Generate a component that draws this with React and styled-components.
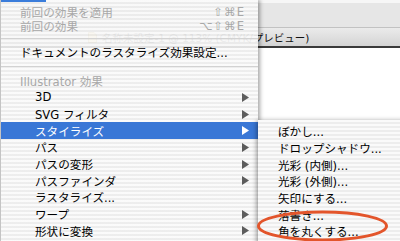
import React from 'react'
import styled, { createGlobalStyle } from 'styled-components'

const FONT = `"DejaVu Sans", "Noto Sans CJK JP", sans-serif`
const STRIPES = `repeating-linear-gradient(rgba(250, 250, 250, 0.93) 0 2px, rgba(236, 236, 236, 0.93) 2px 4px)`

const GlobalStyle = createGlobalStyle`
	html, body {
		margin: 0;
		padding: 0;
	}
	body {
		width: 400px;
		height: 241px;
		overflow: hidden;
		background: #fff;
	}
`

const Desktop = styled.div`
	position: relative;
	width: 400px;
	height: 241px;
	overflow: hidden;
	font-family: ${FONT};
	background: #fff;
`

const DocWindow = styled.div`
	display: flex;
	flex-direction: column;
	height: 100%;
`

const Toolbar = styled.div`
	height: 28px;
	box-sizing: border-box;
	background: linear-gradient(#f6f6f6 0 3px, #e6e6e6 3px);
	border-bottom: 1px solid #c2c2c2;
`

const TitleBar = styled.div`
	height: 20px;
	box-sizing: border-box;
	display: flex;
	align-items: center;
	gap: 5px;
	padding-left: 88px;
	background: linear-gradient(#ebebeb, #d4d4d4);
	border-bottom: 2px solid #3a3a3a;
	font-size: 10.5px;
	color: #111;
	white-space: nowrap;
`

const Canvas = styled.div`
	flex: 1;
	background: #fff;
`

const Menu = styled.div`
	position: absolute;
	left: 0;
	top: 0;
	width: 258px;
	height: 241px;
	box-sizing: border-box;
	background: ${STRIPES};
	border-left: 1px solid #c4c4c4;
	box-shadow: 2px 0 4px rgba(0, 0, 0, 0.35);
`

const MenuTitleMark = styled.div`
	width: 45px;
	height: 2px;
	margin-bottom: 3px;
	background: #3b7ddb;
`

const Submenu = styled.div`
	position: absolute;
	left: 258px;
	top: 120px;
	width: 150px;
	height: 130px;
	padding-top: 3px;
	background: repeating-linear-gradient(#fafafa 0 2px, #ededed 2px 4px);
	box-shadow: -1px 1px 5px rgba(0, 0, 0, 0.45);
`

const Item = styled.div`
	height: ${(p) => p.$h}px;
	display: flex;
	align-items: center;
	padding: 0 9px 0 ${(p) => p.$indent}px;
	font-size: 11.6px;
	white-space: nowrap;
	color: ${(p) => (p.$disabled ? '#a8a8a8' : p.$active ? '#fff' : '#000')};
	background: ${(p) => (p.$active ? '#3977d6' : 'transparent')};
`

const Label = styled.span`
	flex: 1;
`

const Shortcut = styled.span`
	margin-right: 4px;
	font-size: 11.6px;
	color: #a8a8a8;
	letter-spacing: 1px;
`

const Separator = styled.div`
	height: ${(p) => p.$h}px;
	display: flex;
	align-items: center;
	&::after {
		content: '';
		flex: 1;
		height: 1px;
		background: #d2d2d2;
	}
`

const Ring = styled.svg`
	position: absolute;
	left: 255px;
	top: 208px;
	overflow: visible;
`

function Arrow({ active }) {
	return (
		<svg width="7" height="9" viewBox="0 0 7 9">
			<polygon points="0,0 7,4.5 0,9" fill={active ? '#fff' : '#5c5c5c'} />
		</svg>
	)
}

const effects = [
	{ label: '3D', sub: true },
	{ label: 'SVG フィルタ', sub: true },
	{ label: 'スタイライズ', sub: true, active: true },
	{ label: 'パス', sub: true },
	{ label: 'パスの変形', sub: true },
	{ label: 'パスファインダ', sub: true },
	{ label: 'ラスタライズ...' },
	{ label: 'ワープ', sub: true },
	{ label: '形状に変換', sub: true },
]

const stylize = [
	'ぼかし...',
	'ドロップシャドウ...',
	'光彩 (内側)...',
	'光彩 (外側)...',
	'矢印にする...',
	'落書き...',
	'角を丸くする...',
]

export default function App() {
	return (
		<Desktop>
			<GlobalStyle />
			<DocWindow>
				<Toolbar />
				<TitleBar>
					<svg width="9" height="11" viewBox="0 0 9 11">
						<path d="M0.5 0.5h5.5l2.5 2.5v7.5h-8z" fill="#f3d27a" stroke="#a98a3a" />
					</svg>
					<span>名称未設定-1 @ 113% (CMYK/プレビュー)</span>
				</TitleBar>
				<Canvas />
			</DocWindow>

			<Menu>
				<MenuTitleMark />
				<Item $h={14} $indent={19} $disabled>
					<Label>前回の効果を適用</Label>
					<Shortcut>⇧⌘E</Shortcut>
				</Item>
				<Item $h={14} $indent={19} $disabled>
					<Label>前回の効果</Label>
					<Shortcut>⌥⇧⌘E</Shortcut>
				</Item>
				<Separator $h={10} />
				<Item $h={18} $indent={19}>
					<Label>ドキュメントのラスタライズ効果設定...</Label>
				</Item>
				<Separator $h={11} />
				<Item $h={17} $indent={19} $disabled>
					<Label>Illustrator 効果</Label>
				</Item>
				{effects.map((e) => (
					<Item key={e.label} $h={16.7} $indent={34} $active={e.active}>
						<Label>{e.label}</Label>
						{e.sub && <Arrow active={e.active} />}
					</Item>
				))}
			</Menu>

			<Submenu>
				{stylize.map((s) => (
					<Item key={s} $h={16.7} $indent={20}>
						<Label>{s}</Label>
					</Item>
				))}
			</Submenu>

			<Ring width="135" height="36">
				<ellipse cx="67.5" cy="18" rx="64" ry="14" fill="none" stroke="#e3552b" strokeWidth="3" />
			</Ring>
		</Desktop>
	)
}
